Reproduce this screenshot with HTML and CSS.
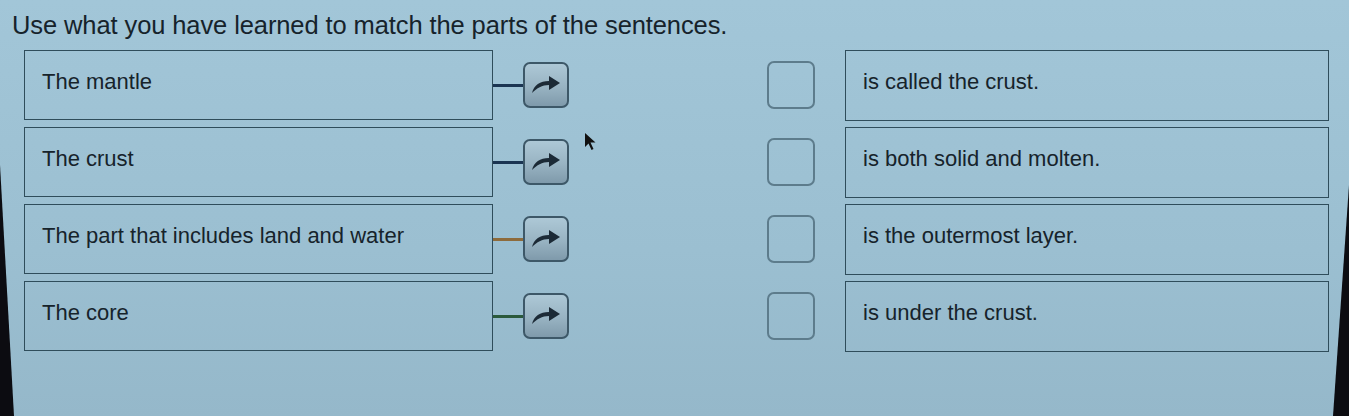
FILE: index.html
```html
<!DOCTYPE html>
<html lang="en">
<head>
<meta charset="utf-8">
<title>Match the parts of the sentences</title>
<link rel="stylesheet" href="styles.css">
</head>
<body>
<main class="screen">
  <h1 class="prompt">Use what you have learned to match the parts of the sentences.</h1>
  <div class="rows">
    <div class="row">
      <div class="stem">The mantle</div>
      <span class="wire wire-navy"></span>
      <button class="drag" aria-label="Match">
        <svg viewBox="0 0 46 46" width="46" height="46"><path d="M9 31 C11 23 17 19 26 19 L26 14 L37 21 L26 28 L26 23 C19 23 14 26 9 31 Z"/></svg>
      </button>
      <span class="slot"></span>
      <div class="answer">is called the crust.</div>
    </div>
    <div class="row">
      <div class="stem">The crust</div>
      <span class="wire wire-navy"></span>
      <button class="drag" aria-label="Match">
        <svg viewBox="0 0 46 46" width="46" height="46"><path d="M9 31 C11 23 17 19 26 19 L26 14 L37 21 L26 28 L26 23 C19 23 14 26 9 31 Z"/></svg>
      </button>
      <span class="slot"></span>
      <div class="answer">is both solid and molten.</div>
    </div>
    <div class="row">
      <div class="stem">The part that includes land and water</div>
      <span class="wire wire-brown"></span>
      <button class="drag" aria-label="Match">
        <svg viewBox="0 0 46 46" width="46" height="46"><path d="M9 31 C11 23 17 19 26 19 L26 14 L37 21 L26 28 L26 23 C19 23 14 26 9 31 Z"/></svg>
      </button>
      <span class="slot"></span>
      <div class="answer">is the outermost layer.</div>
    </div>
    <div class="row">
      <div class="stem">The core</div>
      <span class="wire wire-green"></span>
      <button class="drag" aria-label="Match">
        <svg viewBox="0 0 46 46" width="46" height="46"><path d="M9 31 C11 23 17 19 26 19 L26 14 L37 21 L26 28 L26 23 C19 23 14 26 9 31 Z"/></svg>
      </button>
      <span class="slot"></span>
      <div class="answer">is under the crust.</div>
    </div>
  </div>
  <svg class="cursor" viewBox="0 0 14 20" width="14" height="20"><path d="M1 1 L1 15 L4.5 11.5 L7.5 18 L9.5 17 L6.5 10.5 L11.5 10.5 Z"/></svg>
  <div class="bezel bezel-left"></div>
  <div class="bezel bezel-right"></div>
</main>
</body>
</html>
```

FILE: styles.css
```css
* { box-sizing: border-box; }
html, body { margin: 0; padding: 0; }
body {
  width: 1349px;
  height: 416px;
  overflow: hidden;
  background: #9dc1d3;
  font-family: "Liberation Sans", Arial, sans-serif;
  color: #16232b;
}
.screen {
  position: relative;
  width: 1349px;
  height: 416px;
  padding: 10px 20px 0 24px;
  background: linear-gradient(180deg, #a2c6d8 0%, #9bbfd1 60%, #95b8ca 100%);
}
.prompt {
  margin: 0 0 0 -12px;
  font-size: 25.5px;
  font-weight: normal;
  line-height: 30px;
  color: #16232b;
  letter-spacing: -0.1px;
}
.rows {
  display: flex;
  flex-direction: column;
  gap: 7px;
  margin-top: 10px;
}
.row {
  display: flex;
  align-items: center;
  height: 70px;
}
.stem, .answer {
  height: 70px;
  border: 1.5px solid #2f4d5b;
  font-size: 22px;
  line-height: 26px;
  padding: 18px 17px 0;
  color: #16232b;
}
.stem {
  width: 469px;
  flex: none;
}
.wire {
  width: 30px;
  height: 3px;
  flex: none;
}
.wire-navy { background: #1b3552; }
.wire-brown { background: #8d6b3c; }
.wire-green { background: #2b5a3c; }
.drag {
  width: 46px;
  height: 46px;
  flex: none;
  padding: 0;
  border: 2px solid #3d5868;
  border-radius: 7px;
  background: linear-gradient(180deg, #adc8d6 0%, #98b3c2 55%, #7f9aab 100%);
  display: flex;
  align-items: center;
  justify-content: center;
}
.drag svg { display: block; fill: #1c2a36; margin: -2px; }
.slot {
  width: 48px;
  height: 48px;
  flex: none;
  margin-left: 198px;
  border: 2px solid #5d7c8c;
  border-radius: 7px;
}
.answer {
  flex: 1;
  margin-left: 30px;
  height: 71px;
}
.cursor {
  position: absolute;
  left: 584px;
  top: 132px;
  fill: #111;
}
.bezel {
  position: absolute;
  background: #0c0c11;
}
.bezel-left {
  left: 0;
  top: 165px;
  width: 14px;
  height: 251px;
  clip-path: polygon(0 0, 100% 100%, 0 100%);
}
.bezel-right {
  right: 0;
  top: 185px;
  width: 16px;
  height: 231px;
  clip-path: polygon(100% 0, 100% 100%, 0 100%);
}
```
